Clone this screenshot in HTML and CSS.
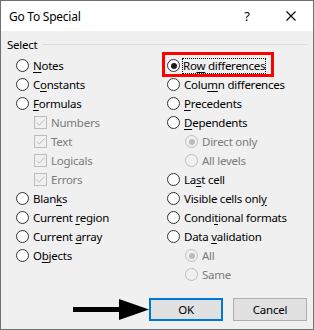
FILE: index.html
```html
<!DOCTYPE html>
<html>
<head>
<meta charset="utf-8">
<link rel="stylesheet" href="styles.css">
</head>
<body>
<div class="window">
  <div class="titlebar">
    <span class="title">Go To Special</span>
    <span class="help">?</span>
    <span class="close">
      <svg width="10" height="10" viewBox="0 0 10 10"><path d="M0.5 0.5 L9.5 9.5 M9.5 0.5 L0.5 9.5" stroke="#000" stroke-width="1.1" fill="none"/></svg>
    </span>
  </div>
  <div class="content">
    <div class="group-head"><span class="group-label">Select</span><span class="rule"></span></div>
    <div class="cols">
      <div class="col">
        <div class="row"><span class="radio"></span><span class="label"><u>N</u>otes</span></div>
        <div class="row"><span class="radio"></span><span class="label">C<u>o</u>nstants</span></div>
        <div class="row"><span class="radio"></span><span class="label"><u>F</u>ormulas</span></div>
        <div class="row sub"><span class="check"><svg width="13" height="13" viewBox="0 0 13 13"><path d="M2.5 6.5 L5.2 9.2 L10.5 3.5" stroke="#bcbcbc" stroke-width="1" fill="none"/></svg></span><span class="label dis">Numbers</span></div>
        <div class="row sub"><span class="check"><svg width="13" height="13" viewBox="0 0 13 13"><path d="M2.5 6.5 L5.2 9.2 L10.5 3.5" stroke="#bcbcbc" stroke-width="1" fill="none"/></svg></span><span class="label dis">Text</span></div>
        <div class="row sub"><span class="check"><svg width="13" height="13" viewBox="0 0 13 13"><path d="M2.5 6.5 L5.2 9.2 L10.5 3.5" stroke="#bcbcbc" stroke-width="1" fill="none"/></svg></span><span class="label dis">Logicals</span></div>
        <div class="row sub"><span class="check"><svg width="13" height="13" viewBox="0 0 13 13"><path d="M2.5 6.5 L5.2 9.2 L10.5 3.5" stroke="#bcbcbc" stroke-width="1" fill="none"/></svg></span><span class="label dis">Errors</span></div>
        <div class="row"><span class="radio"></span><span class="label">Blan<u>k</u>s</span></div>
        <div class="row"><span class="radio"></span><span class="label">Current <u>r</u>egion</span></div>
        <div class="row"><span class="radio"></span><span class="label">Current <u>a</u>rray</span></div>
        <div class="row"><span class="radio"></span><span class="label">O<u>b</u>jects</span></div>
      </div>
      <div class="col">
        <div class="row highlighted"><span class="radio checked"></span><span class="label focus">Ro<u>w</u> differences</span><span class="redbox"></span></div>
        <div class="row"><span class="radio"></span><span class="label">Colu<u>m</u>n differences</span></div>
        <div class="row"><span class="radio"></span><span class="label"><u>P</u>recedents</span></div>
        <div class="row"><span class="radio"></span><span class="label"><u>D</u>ependents</span></div>
        <div class="row sub"><span class="radio disabled checked"></span><span class="label dis">Direct only</span></div>
        <div class="row sub"><span class="radio disabled"></span><span class="label dis">All levels</span></div>
        <div class="row"><span class="radio"></span><span class="label">La<u>s</u>t cell</span></div>
        <div class="row"><span class="radio"></span><span class="label">Visible cells onl<u>y</u></span></div>
        <div class="row"><span class="radio"></span><span class="label">Condi<u>t</u>ional formats</span></div>
        <div class="row"><span class="radio"></span><span class="label">Data <u>v</u>alidation</span></div>
        <div class="row sub"><span class="radio disabled checked"></span><span class="label dis">All</span></div>
        <div class="row sub"><span class="radio disabled"></span><span class="label dis">Same</span></div>
      </div>
    </div>
    <div class="footer">
      <svg class="arrow" width="76" height="21" viewBox="0 0 76 21"><rect x="0" y="8" width="48" height="5" fill="#000"/><polygon points="46,0 76,10.5 46,21" fill="#000"/></svg>
      <button class="btn ok">OK</button>
      <button class="btn">Cancel</button>
    </div>
  </div>
</div>
</body>
</html>
```
FILE: styles.css
```css
html, body {
  margin: 0;
  padding: 0;
  background: #f0f0f0;
}
body {
  font-family: "Noto Sans", "Open Sans", sans-serif;
  font-size: 11.5px;
  letter-spacing: -0.25px;
  color: #000;
}
.window {
  width: 314px;
  height: 330px;
  box-sizing: border-box;
  border: 1px solid #707070;
  display: flex;
  flex-direction: column;
  background: #f0f0f0;
}
.titlebar {
  height: 30px;
  flex: none;
  background: #fff;
  display: flex;
  align-items: center;
  padding-left: 8px;
  padding-right: 15px;
}
.title {
  flex: 1;
  font-size: 12px;
}
.help {
  width: 12px;
  text-align: center;
  font-size: 13px;
  margin-right: 31px;
}
.close {
  width: 14px;
  height: 14px;
  display: flex;
  align-items: center;
  justify-content: center;
}
.close svg { display: block; }
.content {
  flex: 1;
  display: flex;
  flex-direction: column;
}
.group-head {
  margin-top: 5px;
  height: 16px;
  display: flex;
  align-items: center;
  padding-left: 6px;
  padding-right: 5px;
}
.rule {
  flex: 1;
  height: 1px;
  background: #dcdcdc;
  margin-left: 6px;
}
.cols {
  margin-top: 4px;
  display: grid;
  grid-template-columns: 151px 1fr;
  padding-left: 15px;
}
.row {
  height: 19px;
  display: flex;
  align-items: center;
  position: relative;
}
.row.sub {
  padding-left: 18px;
}
.radio {
  width: 13px;
  height: 13px;
  box-sizing: border-box;
  border: 1px solid #333;
  border-radius: 50%;
  background: #fff;
  display: flex;
  align-items: center;
  justify-content: center;
  flex: none;
}
.radio.checked::after {
  content: "";
  width: 6px;
  height: 6px;
  border-radius: 50%;
  background: #1a1a1a;
}
.radio.disabled {
  border-color: #bcbcbc;
  background: #f0f0f0;
}
.radio.disabled.checked::after {
  background: #bcbcbc;
}
.check {
  width: 13px;
  height: 13px;
  box-sizing: border-box;
  border: 1px solid #bcbcbc;
  background: #f0f0f0;
  flex: none;
  position: relative;
}
.check svg {
  position: absolute;
  left: -1px;
  top: -1px;
}
.label {
  margin-left: 4px;
  line-height: 16px;
  white-space: nowrap;
}
.label.dis {
  color: #7a7a7a;
}
.label.focus {
  margin-left: 2px;
  padding: 0 1px;
  outline: 1px dotted #000;
  outline-offset: -1px;
}
u {
  text-underline-offset: 2px;
}
.redbox {
  position: absolute;
  left: -5px;
  top: -4px;
  width: 112px;
  height: 25px;
  box-sizing: border-box;
  border: 3px solid #f00;
}
.footer {
  margin-top: auto;
  display: flex;
  justify-content: flex-end;
  align-items: center;
  padding-right: 6px;
  padding-bottom: 8px;
}
.arrow {
  display: block;
  flex: none;
}
.btn {
  width: 74px;
  height: 23px;
  box-sizing: border-box;
  border: 1px solid #adadad;
  background: #e1e1e1;
  font-family: "Noto Sans", "Open Sans", sans-serif;
  font-size: 11.5px;
  letter-spacing: -0.25px;
  color: #000;
  padding: 0;
  margin: 0;
}
.btn.ok {
  border: 2px solid #0078d7;
  margin-right: 10px;
}
```
